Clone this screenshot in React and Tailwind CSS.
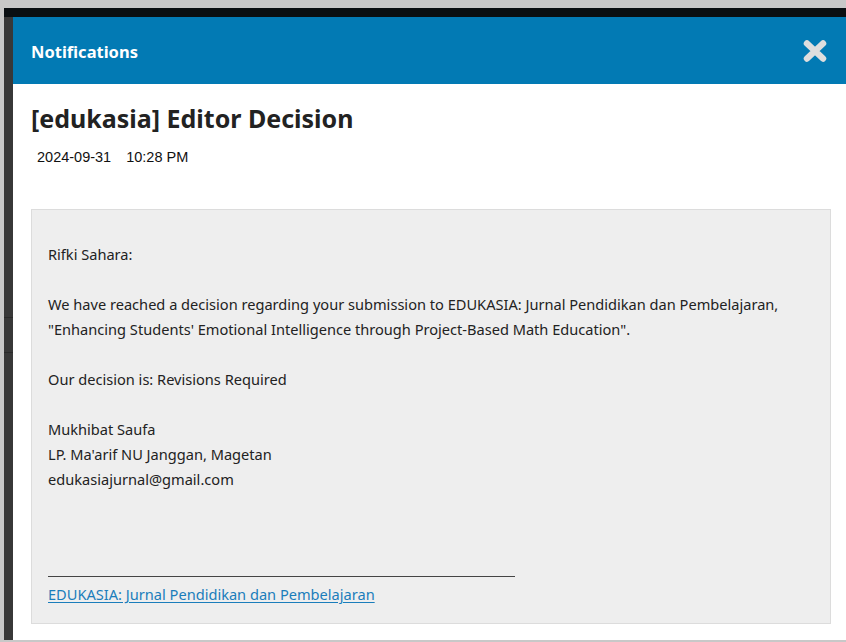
export default function App() {
  return (
    <div className="w-[846px] h-[642px] overflow-hidden bg-[#c8c8c8] pl-1 pt-2 pb-[2px] flex flex-col" style={{ fontFamily: '"Noto Sans", sans-serif' }}>
      <div className="flex-1 flex flex-col bg-[#0a0f12] pt-[9px]">
        <div className="flex-1 flex">
          {/* dimmed page behind the dialog */}
          <div className="w-[9px] bg-[#383838] flex flex-col">
            <div className="h-[300px]" />
            <div className="h-px bg-[#2a2a2a]" />
            <div className="h-[34px]" />
            <div className="h-px bg-[#2a2a2a]" />
          </div>
          {/* dialog */}
          <div className="flex-1 bg-white flex flex-col">
            <div className="h-[67px] bg-[#027ab4] flex items-center justify-between pl-[18px] pr-[19px]">
              <span className="pt-[3px] text-white font-bold text-[16.5px]">Notifications</span>
              <svg width="24" height="22" viewBox="0 0 24 22" aria-label="Close">
                <path d="M4 3.5 L20 18.5 M20 3.5 L4 18.5" stroke="#dedede" strokeWidth="6.5" strokeLinecap="round" />
              </svg>
            </div>
            <div className="pl-[18px] pr-[15px]">
              <h1 className="mt-[18px] text-[25px] leading-[32px] font-bold text-[#222]">[edukasia] Editor Decision</h1>
              <div className="mt-[15px] pl-[6px] flex text-[14.5px] leading-[16px] text-[#111]" style={{ fontFamily: '"Liberation Sans", Arial, sans-serif' }}>
                <span>2024-09-31</span>
                <span className="ml-[15px]">10:28 PM</span>
              </div>
              <div className="mt-[44px] h-[415px] bg-[#eeeeee] border border-[#dcdcdc] pl-[16px] pt-[32px] text-[14.6px] leading-[25px] text-[#222]">
                <div>Rifki Sahara:</div>
                <div className="mt-[25px]">We have reached a decision regarding your submission to EDUKASIA: Jurnal Pendidikan dan Pembelajaran,</div>
                <div>"Enhancing Students' Emotional Intelligence through Project-Based Math Education".</div>
                <div className="mt-[25px]">Our decision is: Revisions Required</div>
                <div className="mt-[25px]">Mukhibat Saufa</div>
                <div>LP. Ma'arif NU Janggan, Magetan</div>
                <div>edukasiajurnal@gmail.com</div>
                <div className="mt-[84px] w-[467px] h-px bg-[#444]" />
                <div className="mt-[5px]">
                  <a href="#" className="text-[#1a7dbb] underline underline-offset-2">EDUKASIA: Jurnal Pendidikan dan Pembelajaran</a>
                </div>
              </div>
            </div>
          </div>
        </div>
      </div>
    </div>
  );
}
